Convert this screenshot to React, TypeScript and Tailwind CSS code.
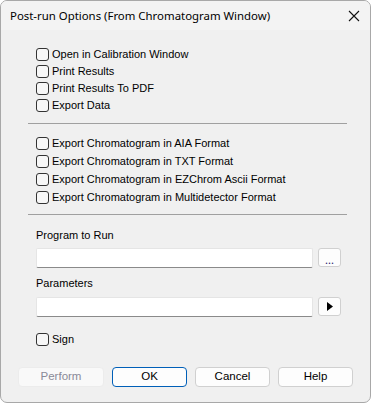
import React from "react";

const groupOne = ["Open in Calibration Window", "Print Results", "Print Results To PDF", "Export Data"];
const groupTwo = [
  "Export Chromatogram in AIA Format",
  "Export Chromatogram in TXT Format",
  "Export Chromatogram in EZChrom Ascii Format",
  "Export Chromatogram in Multidetector Format",
];

const sans = { fontFamily: '"Liberation Sans", Arial, sans-serif' };

function Check({ label, className = "h-[17px]" }: { label: string; className?: string }) {
  return (
    <label className={`flex items-center gap-[3px] ${className}`}>
      <span className="w-[13px] h-[13px] rounded-[3px] border border-[#333] bg-[#f7f7f7]" />
      <span className="text-[11px] text-black leading-none" style={sans}>
        {label}
      </span>
    </label>
  );
}

function Btn({ children, primary, disabled }: { children: React.ReactNode; primary?: boolean; disabled?: boolean }) {
  return (
    <button
      style={sans}
      className={`h-[20px] rounded-[4px] border text-[11.5px] leading-none ${
        primary
          ? "w-[75px] border-[#005fb8] bg-[#fdfdfd] text-black"
          : disabled
          ? "w-[86px] border-[#ececec] bg-[#f9f9f9] text-[#8a8a98]"
          : "w-[75px] border-[#d0d0d0] bg-[#fdfdfd] text-black"
      }`}
    >
      {children}
    </button>
  );
}

export default function App() {
  return (
    <div
      className="w-[371px] h-[403px] rounded-[7px] border border-[#a8a8a8] bg-[#f0f0f0] overflow-hidden flex flex-col"
      style={{ fontFamily: '"Noto Sans", "Open Sans", sans-serif' }}
    >
      <div className="h-[29px] flex items-center justify-between pl-[9px] pr-[9px] bg-[#f3f3f3]">
        <span className="text-[11.4px] text-black">Post-run Options (From Chromatogram Window)</span>
        <svg width="12" height="12" viewBox="0 0 12 12" className="mr-[1px]">
          <path d="M1 1 L11 11 M11 1 L1 11" stroke="#111" strokeWidth="1.1" />
        </svg>
      </div>

      <div className="flex flex-col pt-[16px] pl-[35px] pr-[23px]">
        {groupOne.map((l) => (
          <Check key={l} label={l} />
        ))}
        <div className="h-px bg-[#a0a0a0] ml-[-8px] mt-[9px] mb-[10px]" />
        {groupTwo.map((l) => (
          <Check key={l} label={l} className="h-[18px]" />
        ))}
        <div className="h-px bg-[#a0a0a0] ml-[-8px] mt-[8px]" />

        <div className="text-[11px] text-black mt-[15px] leading-none" style={sans}>
          Program to Run
        </div>
        <div className="flex items-start gap-[5px] mt-[7px]">
          <div className="w-[277px] h-[20px] bg-white border border-[#e5e5e5] border-b-[#8a8a8a] rounded-[2px]" />
          <div className="w-[23px] h-[19px] rounded-[3px] border border-[#d0d0d0] bg-[#fdfdfd] flex items-center justify-center text-[11px] leading-none text-[#1a1a6a] pt-[3px]">
            ...
          </div>
        </div>

        <div className="text-[11px] text-black mt-[10px] leading-none" style={sans}>
          Parameters
        </div>
        <div className="flex items-start gap-[5px] mt-[8px]">
          <div className="w-[277px] h-[20px] bg-white border border-[#e5e5e5] border-b-[#8a8a8a] rounded-[2px]" />
          <div className="w-[23px] h-[19px] rounded-[3px] border border-[#d0d0d0] bg-[#fdfdfd] flex items-center justify-center">
            <svg width="6" height="9" viewBox="0 0 6 9">
              <path d="M0 0 L6 4.5 L0 9 Z" fill="#000" />
            </svg>
          </div>
        </div>

        <div className="mt-[14px]">
          <Check label="Sign" />
        </div>
      </div>

      <div className="flex items-center gap-[8px] pl-[17px] mt-[19px]">
        <Btn disabled>Perform</Btn>
        <Btn primary>OK</Btn>
        <Btn>Cancel</Btn>
        <Btn>Help</Btn>
      </div>
    </div>
  );
}
